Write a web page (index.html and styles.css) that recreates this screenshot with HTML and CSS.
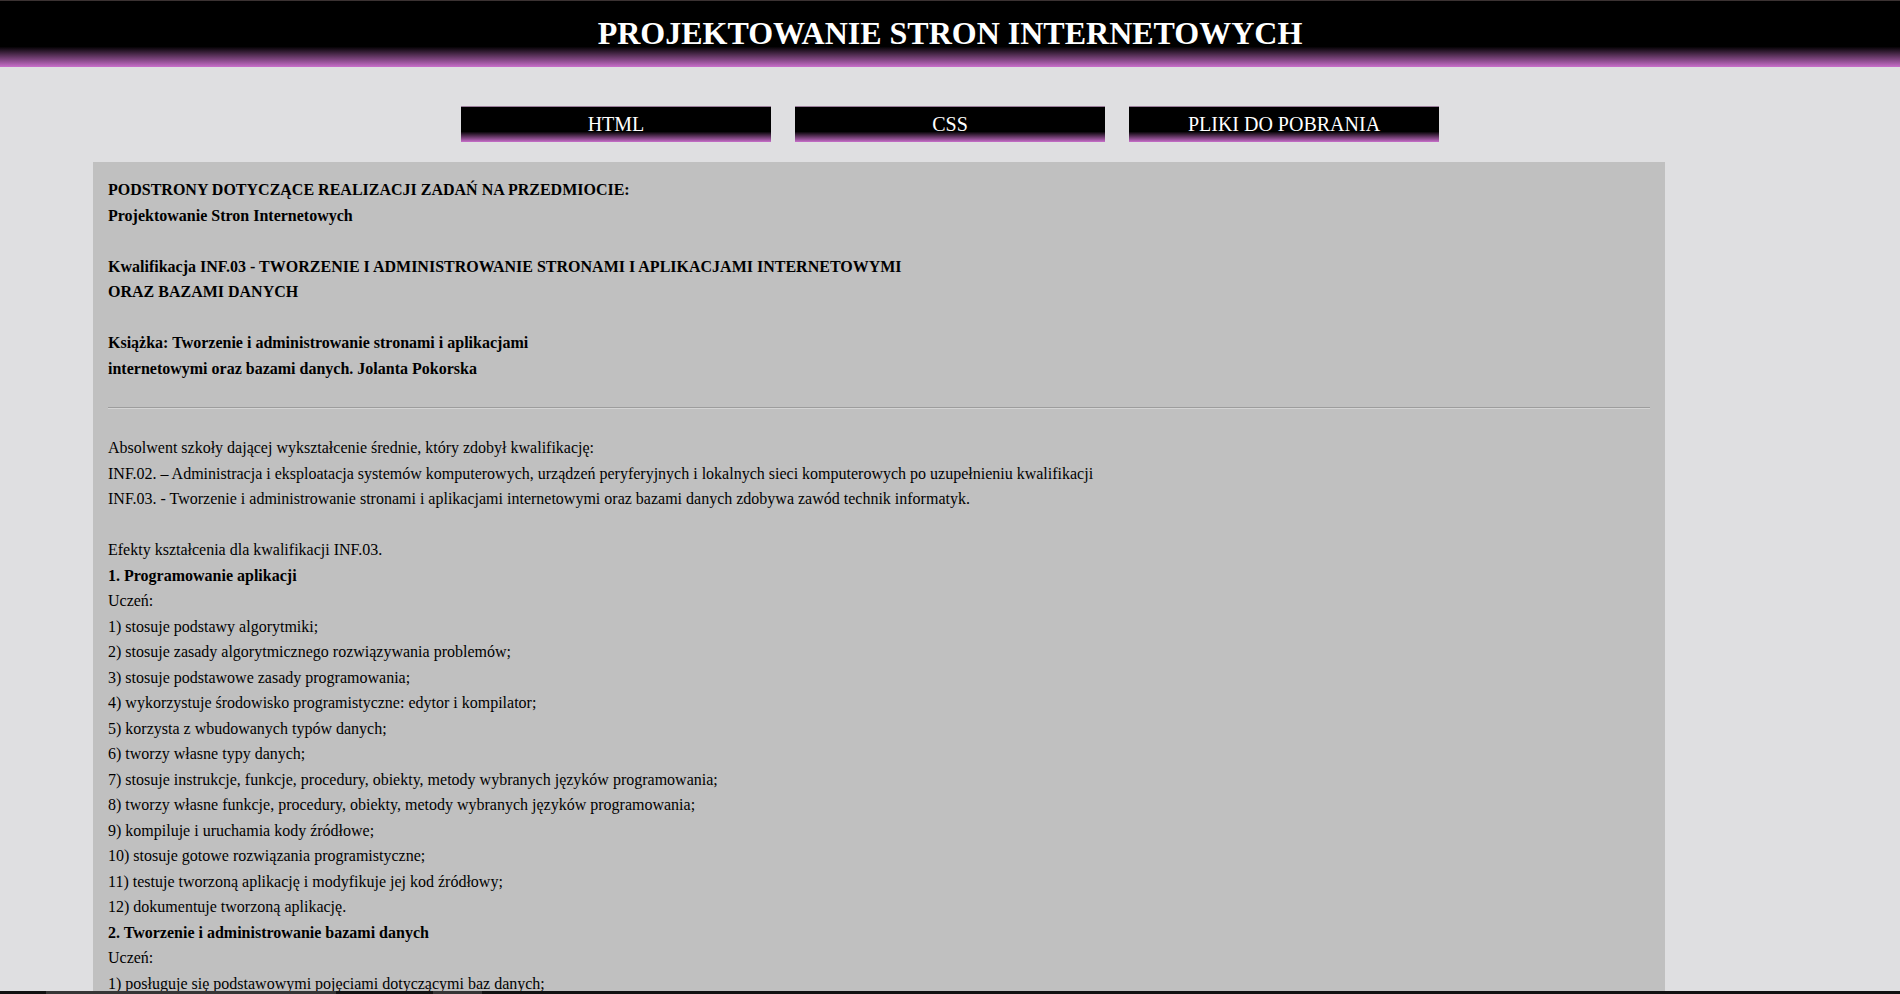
FILE: index.html
```html
<!DOCTYPE html>
<html lang="pl">
<head>
<meta charset="utf-8">
<title>Projektowanie Stron Internetowych</title>
<link rel="stylesheet" href="styles.css">
</head>
<body>
<header class="top">
  <h1 class="title">PROJEKTOWANIE STRON INTERNETOWYCH</h1>
</header>
<nav class="menu">
  <a class="btn" href="#">HTML</a>
  <a class="btn" href="#">CSS</a>
  <a class="btn" href="#">PLIKI DO POBRANIA</a>
</nav>
<main class="box">
  <div class="intro">
    <div class="line">PODSTRONY DOTYCZĄCE REALIZACJI ZADAŃ NA PRZEDMIOCIE:</div>
    <div class="line">Projektowanie Stron Internetowych</div>
    <div class="line blank"></div>
    <div class="line">Kwalifikacja INF.03 - TWORZENIE I ADMINISTROWANIE STRONAMI I APLIKACJAMI INTERNETOWYMI</div>
    <div class="line">ORAZ BAZAMI DANYCH</div>
    <div class="line blank"></div>
    <div class="line">Książka: Tworzenie i administrowanie stronami i aplikacjami</div>
    <div class="line">internetowymi oraz bazami danych. Jolanta Pokorska</div>
  </div>
  <hr class="sep">
  <div class="text">
    <div class="line">Absolwent szkoły dającej wykształcenie średnie, który zdobył kwalifikację:</div>
    <div class="line">INF.02. – Administracja i eksploatacja systemów komputerowych, urządzeń peryferyjnych i lokalnych sieci komputerowych po uzupełnieniu kwalifikacji</div>
    <div class="line">INF.03. - Tworzenie i administrowanie stronami i aplikacjami internetowymi oraz bazami danych zdobywa zawód technik informatyk.</div>
    <div class="line blank"></div>
    <div class="line">Efekty kształcenia dla kwalifikacji INF.03.</div>
    <div class="line strong">1. Programowanie aplikacji</div>
    <div class="line">Uczeń:</div>
    <div class="line">1) stosuje podstawy algorytmiki;</div>
    <div class="line">2) stosuje zasady algorytmicznego rozwiązywania problemów;</div>
    <div class="line">3) stosuje podstawowe zasady programowania;</div>
    <div class="line">4) wykorzystuje środowisko programistyczne: edytor i kompilator;</div>
    <div class="line">5) korzysta z wbudowanych typów danych;</div>
    <div class="line">6) tworzy własne typy danych;</div>
    <div class="line">7) stosuje instrukcje, funkcje, procedury, obiekty, metody wybranych języków programowania;</div>
    <div class="line">8) tworzy własne funkcje, procedury, obiekty, metody wybranych języków programowania;</div>
    <div class="line">9) kompiluje i uruchamia kody źródłowe;</div>
    <div class="line">10) stosuje gotowe rozwiązania programistyczne;</div>
    <div class="line">11) testuje tworzoną aplikację i modyfikuje jej kod źródłowy;</div>
    <div class="line">12) dokumentuje tworzoną aplikację.</div>
    <div class="line strong">2. Tworzenie i administrowanie bazami danych</div>
    <div class="line">Uczeń:</div>
    <div class="line">1) posługuje się podstawowymi pojęciami dotyczącymi baz danych;</div>
    <div class="line">2) posługuje się podstawowymi pojęciami dotyczącymi modelowania baz danych;</div>
    <div class="line">3) stosuje reguły relacyjnego modelu baz danych;</div>
    <div class="line">4) tworzy diagramy związków encji;</div>
    <div class="line">5) projektuje relacyjne bazy danych;</div>
  </div>
</main>
<div class="bottombar"><span class="seg seg1"></span><span class="seg seg2"></span></div>
</body>
</html>
```
FILE: styles.css
```css
html, body {
  margin: 0;
  padding: 0;
}
body {
  background: #dfdfe1;
  font-family: "Liberation Serif", "Times New Roman", serif;
  font-size: 16px;
  color: #000;
}
.top {
  border-top: 1px solid #3b3232;
  padding: 14px 0 15px;
  background: linear-gradient(to bottom, #000 0%, #000 69%, #c96fcb 100%);
  text-align: center;
}
.title {
  margin: 0;
  font-size: 32px;
  font-weight: bold;
  line-height: normal;
  color: #fff;
}
.menu {
  display: flex;
  justify-content: center;
  gap: 24px;
  margin: 39px 0 20px;
}
.btn {
  display: block;
  width: 310px;
  box-sizing: border-box;
  border-top: 1px solid #9a7d9a;
  padding: 6px 0;
  height: 36px;
  background: linear-gradient(to bottom, #000 0%, #000 70%, #c96fcb 100%);
  color: #fff;
  text-decoration: none;
  text-align: center;
  font-size: 20px;
  line-height: 23px;
}
.box {
  display: block;
  margin-left: 93px;
  width: 1572px;
  box-sizing: border-box;
  background: #c0c0c0;
  padding: 15px 15px 20px;
}
.line {
  line-height: 25.5px;
  min-height: 25.5px;
  white-space: nowrap;
}
.intro .line,
.strong {
  font-weight: bold;
}
.sep {
  margin: 26px 0 26px;
  border: 0;
  border-top: 1px solid #9d9d9d;
  border-bottom: 1px solid #d4d4d4;
  height: 0;
}
.bottombar {
  position: fixed;
  left: 0;
  right: 0;
  bottom: 0;
  height: 3px;
  background: #121212;
}
.seg {
  position: absolute;
  top: 0;
  height: 3px;
  background: #363636;
}
.seg1 {
  left: 46px;
  width: 290px;
}
.seg2 {
  left: 433px;
  width: 49px;
}
```
